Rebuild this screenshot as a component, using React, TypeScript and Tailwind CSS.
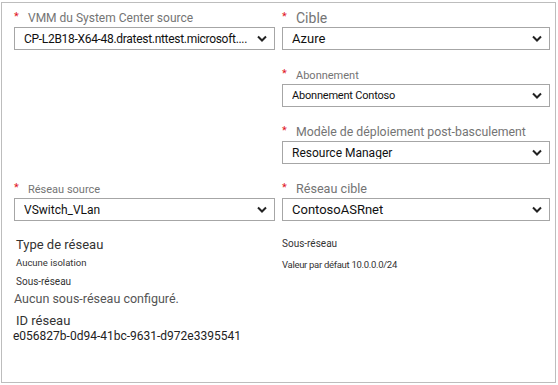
import React from 'react';

const font = { fontFamily: 'Roboto, "Liberation Sans", sans-serif' };

const Chevron = () => (
  <svg width="10" height="7" viewBox="0 0 10 7" className="shrink-0">
    <polyline points="1,1.5 5,5.5 9,1.5" fill="none" stroke="#222" strokeWidth="2" />
  </svg>
);

interface FieldProps {
  label: string;
  value: string;
  labelSize?: string;
  valueSize?: string;
}

const Field = ({ label, value, labelSize = 'text-[13px]', valueSize = 'text-[13px]' }: FieldProps) => (
  <div className="mb-[16px]">
    <div className="flex items-center h-[18px]">
      <span className="text-[#e0161b] text-[11px] w-[14px] leading-none -mt-[3px]">*</span>
      <span className={`${labelSize} text-[#747474] leading-none whitespace-nowrap`}>{label}</span>
    </div>
    <div className="h-[23px] border border-[#a6a6a6] bg-white flex items-center pl-[9px] pr-[7px] gap-1">
      <span className={`flex-1 truncate ${valueSize} text-[#111] leading-none`}>{value}</span>
      <Chevron />
    </div>
  </div>
);

export default function App() {
  return (
    <div className="w-[558px] h-[385px] bg-white pt-[2px] pl-[1px]" style={font}>
      <div className="w-[555px] h-[381px] border border-[#bdbdbd] pt-[6px] pl-[12px] pr-[5px]">
        <div className="grid grid-cols-[261px_268px] gap-x-[7px]">
          <div>
            <Field
              label="VMM du System Center source"
              value="CP-L2B18-X64-48.dratest.nttest.microsoft...."
              labelSize="text-[12px]"
              valueSize="text-[12px] tracking-[-0.3px]"
            />
          </div>
          <div>
            <Field label="Cible" value="Azure" labelSize="text-[14px]" />
            <Field
              label="Abonnement"
              value="Abonnement Contoso"
              labelSize="text-[11px]"
              valueSize="text-[11px] tracking-[-0.2px]"
            />
            <Field
              label="Modèle de déploiement post-basculement"
              value="Resource Manager"
              labelSize="text-[12.3px]"
              valueSize="text-[12px]"
            />
          </div>
          <div>
            <Field label="Réseau source" value="VSwitch_VLan" labelSize="text-[11px]" valueSize="text-[12px]" />
            <div className="pl-[2px] mt-[4px]">
              <div className="text-[13px] text-[#333] leading-[16px]">Type de réseau</div>
              <div className="text-[9.5px] text-[#333] leading-[14px] mt-[3px]">Aucune isolation</div>
              <div className="text-[10px] text-[#333] leading-[14px] mt-[5px]">Sous-réseau</div>
              <div className="text-[12.5px] text-[#555] leading-[18px] mt-[1px] -ml-[2px]">
                Aucun sous-réseau configuré.
              </div>
              <div className="text-[13px] text-[#333] leading-[16px] mt-[5px]">ID réseau</div>
              <div className="text-[12px] text-[#222] leading-[15px] -ml-[3px]">e056827b-0d94-41bc-9631-d972e3395541</div>
            </div>
          </div>
          <div>
            <Field label="Réseau cible" value="ContosoASRnet" labelSize="text-[12.6px]" />
            <div className="mt-0">
              <div className="text-[10px] text-[#333] leading-[14px]">Sous-réseau</div>
              <div className="text-[9.5px] tracking-[-0.3px] text-[#333] leading-[14px] mt-[7px]">
                Valeur par défaut 10.0.0.0/24
              </div>
            </div>
          </div>
        </div>
      </div>
    </div>
  );
}
